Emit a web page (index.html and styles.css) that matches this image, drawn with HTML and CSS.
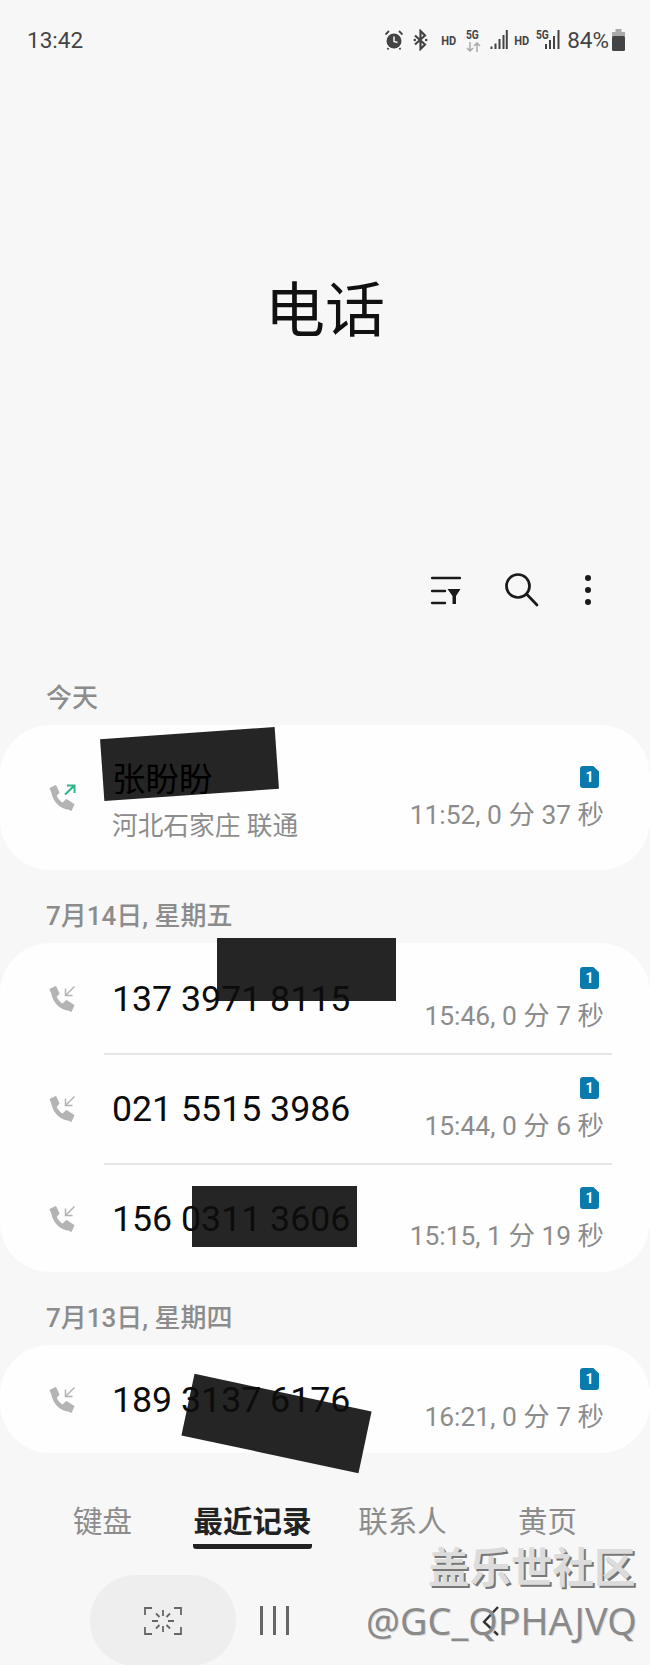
FILE: index.html
```html
<!DOCTYPE html>
<html lang="zh-CN">
<head>
    <meta charset="UTF-8">
    <meta name="viewport" content="width=device-width, initial-scale=1.0">
    <title>电话</title>
    <link rel="stylesheet" href="styles.css">
</head>
<body>
    <svg class="svg-defs" width="0" height="0">
        <defs>
            <g id="handset">
                <path d="M5.500 5.500C5 14 12 23 22 23.500" fill="none" stroke="#b4b4b4" stroke-width="4.400"/>
                <path d="M2.500 4.500L7.500 2L10.500 8.500L6.500 12.500Z" fill="#b4b4b4" stroke="#b4b4b4" stroke-width="1.800" stroke-linejoin="round"/>
                <path d="M14.500 20L18.500 16L25.500 20.500L23 26Z" fill="#b4b4b4" stroke="#b4b4b4" stroke-width="1.800" stroke-linejoin="round"/>
            </g>
        </defs>
    </svg>

    <!-- status bar -->
    <div class="status">
        <span class="clock">13:42</span>
        <div class="status-icons">
            <svg class="ic-alarm" width="18" height="20" viewBox="0 0 18 20">
                <circle cx="9" cy="11" r="7.500" fill="#444"/>
                <path d="M9 6.500V11.500L12.500 12.500" fill="none" stroke="#f7f7f7" stroke-width="1.500"/>
                <path d="M0.500 4.500L4 1M17.500 4.500L14 1M3.500 18L2.500 19.500M14.500 18L15.500 19.500" stroke="#444" stroke-width="1.800"/>
            </svg>
            <svg class="ic-bt" width="15" height="22" viewBox="0 0 15 22">
                <path d="M2 6.500L12 15.500L7.500 20V2L12 6.500L2 15.500" fill="none" stroke="#444" stroke-width="2.200"/>
                <circle cx="1.800" cy="11" r="1.300" fill="#444"/>
                <circle cx="13.200" cy="11" r="1.300" fill="#444"/>
            </svg>
            <span class="hd">HD</span>
            <div class="net">
                <span class="fiveg">5G</span>
                <svg width="15" height="10" viewBox="0 0 15 10">
                    <path d="M4 0V9M1 6L4 9L7 6" fill="none" stroke="#aaa" stroke-width="1.500"/>
                    <path d="M11 10V1M8 4L11 1L14 4" fill="none" stroke="#aaa" stroke-width="1.500"/>
                </svg>
            </div>
            <svg class="ic-signal" width="18" height="22" viewBox="0 0 18 22">
                <path d="M1.500 20V17.500M5.500 20V14.500M9.500 20V10M13.500 20V6M16.800 20V1" stroke="#444" stroke-width="2"/>
            </svg>
            <span class="hd hd2">HD</span>
            <div class="net2">
                <span class="fiveg">5G</span>
                <svg width="18" height="22" viewBox="0 0 18 22">
                    <path d="M3 20V15M7 20V11M11 20V7M15.500 20V1" stroke="#444" stroke-width="2"/>
                </svg>
            </div>
            <span class="percent">84%</span>
            <svg width="13" height="22" viewBox="0 0 13 22">
                <rect x="3.500" y="0" width="6" height="3" fill="#aaa"/>
                <rect x="0" y="3" width="13" height="5" fill="#aaa"/>
                <rect x="0" y="7" width="13" height="15" rx="1.500" fill="#444"/>
            </svg>
        </div>
    </div>

    <h1 class="title">电话</h1>

    <!-- toolbar -->
    <div class="toolbar">
        <svg width="30" height="30" viewBox="0 0 30 30">
            <path d="M1 3H29M1 16H14M1 28H14" stroke="#1a1a1a" stroke-width="2.400" stroke-linecap="round"/>
            <path d="M16.500 14H29.500L25 21V29H21.500V21Z" fill="#1a1a1a"/>
        </svg>
        <svg class="tool-search" width="36" height="34" viewBox="0 0 36 34">
            <circle cx="14" cy="13" r="11.500" fill="none" stroke="#1a1a1a" stroke-width="2.700"/>
            <path d="M22.500 21L33 32" stroke="#1a1a1a" stroke-width="2.700" stroke-linecap="round"/>
        </svg>
        <svg class="tool-more" width="8" height="32" viewBox="0 0 8 32">
            <circle cx="4" cy="4" r="3" fill="#1a1a1a"/>
            <circle cx="4" cy="16" r="3" fill="#1a1a1a"/>
            <circle cx="4" cy="28" r="3" fill="#1a1a1a"/>
        </svg>
    </div>

    <!-- redaction blocks lying over the list -->
    <div class="redact redact-name"></div>
    <div class="redact redact-a"></div>
    <div class="redact redact-b"></div>
    <div class="redact redact-c"></div>

    <div class="section-label first">今天</div>
    <div class="card">
        <div class="row row-tall">
            <svg class="call-icon" width="28" height="28" viewBox="0 0 28 28">
                <use href="#handset"/>
                <path d="M17 10.500L26.500 1.500M19 1.500H26.500V9" fill="none" stroke="#2fb58c" stroke-width="2"/>
            </svg>
            <div class="call-text">
                <div class="name">张盼盼</div>
                <div class="place">河北石家庄 联通</div>
            </div>
            <div class="call-meta">
                <div class="sim">1</div>
                <div class="time">11:52, 0 分 37 秒</div>
            </div>
        </div>
    </div>

    <div class="section-label">7月14日, 星期五</div>
    <div class="card">
        <div class="row">
            <svg class="call-icon" width="28" height="28" viewBox="0 0 28 28">
                <use href="#handset"/>
                <path d="M26.500 1.500L17.500 10.500M17.500 3.500V10.500H24.500" fill="none" stroke="#b4b4b4" stroke-width="1.500"/>
            </svg>
            <div class="call-text"><div class="number">137 3971 8115</div></div>
            <div class="call-meta">
                <div class="sim">1</div>
                <div class="time">15:46, 0 分 7 秒</div>
            </div>
        </div>
        <div class="row row-line">
            <svg class="call-icon" width="28" height="28" viewBox="0 0 28 28">
                <use href="#handset"/>
                <path d="M26.500 1.500L17.500 10.500M17.500 3.500V10.500H24.500" fill="none" stroke="#b4b4b4" stroke-width="1.500"/>
            </svg>
            <div class="call-text"><div class="number">021 5515 3986</div></div>
            <div class="call-meta">
                <div class="sim">1</div>
                <div class="time">15:44, 0 分 6 秒</div>
            </div>
        </div>
        <div class="row row-line">
            <svg class="call-icon" width="28" height="28" viewBox="0 0 28 28">
                <use href="#handset"/>
                <path d="M26.500 1.500L17.500 10.500M17.500 3.500V10.500H24.500" fill="none" stroke="#b4b4b4" stroke-width="1.500"/>
            </svg>
            <div class="call-text"><div class="number">156 0311 3606</div></div>
            <div class="call-meta">
                <div class="sim">1</div>
                <div class="time">15:15, 1 分 19 秒</div>
            </div>
        </div>
    </div>

    <div class="section-label">7月13日, 星期四</div>
    <div class="card">
        <div class="row row-single">
            <svg class="call-icon" width="28" height="28" viewBox="0 0 28 28">
                <use href="#handset"/>
                <path d="M26.500 1.500L17.500 10.500M17.500 3.500V10.500H24.500" fill="none" stroke="#b4b4b4" stroke-width="1.500"/>
            </svg>
            <div class="call-text"><div class="number">189 3137 6176</div></div>
            <div class="call-meta">
                <div class="sim">1</div>
                <div class="time">16:21, 0 分 7 秒</div>
            </div>
        </div>
    </div>

    <!-- bottom tabs -->
    <div class="tabs">
        <div class="tab">键盘</div>
        <div class="tab tab-active"><span>最近记录</span></div>
        <div class="tab">联系人</div>
        <div class="tab">黄页</div>
    </div>

    <!-- nav bar -->
    <div class="nav">
        <div class="nav-pill">
            <svg width="38" height="28" viewBox="0 0 38 28" fill="none" stroke="#666" stroke-width="1.800">
                <path d="M8 1H1V8M30 1H37V8M1 20V27H8M37 20V27H30"/>
                <path d="M19 3V9M19 19V25M8 14H14M24 14H30M12 6.500L15.500 10M26 6.500L22.500 10M12 21.500L15.500 18M26 21.500L22.500 18"/>
            </svg>
        </div>
        <div class="nav-recent"><i></i><i></i><i></i></div>
        <svg class="nav-back" width="18" height="30" viewBox="0 0 18 30">
            <path d="M16 1L2 16L16 29" fill="none" stroke="#333" stroke-width="2.400"/>
        </svg>
    </div>

    <!-- watermark over the nav bar -->
    <div class="mark-title">盖乐世社区</div>
    <div class="mark-user">@GC_QPHAJVQ</div>
</body>
</html>
```

FILE: styles.css
```css
* {
    margin: 0;
    padding: 0;
    box-sizing: border-box;
}

html, body {
    height: 1665px;
    overflow: hidden;
}

body {
    position: relative;
    background-color: #f7f7f7;
    font-family: Roboto, "Noto Sans CJK SC", sans-serif;
    color: #000;
}

.svg-defs {
    display: block;
    height: 0;
}

/* status bar */
.status {
    height: 80px;
    display: flex;
    align-items: center;
    justify-content: space-between;
    padding: 0 25px 0 27px;
    color: #444;
}

.clock {
    font-size: 22.500px;
}

.status-icons {
    display: flex;
    align-items: center;
}

.ic-bt {
    margin-left: 10px;
}

.hd {
    margin-left: 12px;
    font-size: 13px;
    font-weight: 700;
    transform: scaleX(0.85);
}

.hd2 {
    margin-left: 5px;
}

.net {
    margin-left: 8px;
    width: 16px;
    display: flex;
    flex-direction: column;
    align-items: center;
}

.net2 {
    margin-left: 6px;
    width: 25px;
    height: 22px;
    display: flex;
}

.net2 svg {
    flex-shrink: 0;
}

.net2 .fiveg {
    width: 7px;
    line-height: 12px;
}

.fiveg {
    font-size: 12px;
    font-weight: 700;
    line-height: 13px;
    transform: scaleX(0.85);
    transform-origin: left;
}

.ic-signal {
    margin-left: 8px;
}

.percent {
    margin-left: 6px;
    margin-right: 3px;
    font-size: 22.500px;
}

/* title and tools */
.title {
    margin-top: 192px;
    height: 80px;
    line-height: 80px;
    margin-bottom: 208px;
    text-align: center;
    font-size: 60px;
    font-weight: 400;
    color: #111;
}

.toolbar {
    height: 60px;
    display: flex;
    align-items: center;
    justify-content: flex-end;
    padding-right: 58px;
}

.tool-search {
    margin-left: 43px;
}

.tool-more {
    margin-left: 44px;
}

/* list */
.section-label {
    height: 46px;
    line-height: 46px;
    margin: 23px 0 4px;
    padding-left: 46px;
    font-size: 26px;
    font-weight: 500;
    color: #8c8c8c;
}

.section-label.first {
    margin-top: 55px;
}

.card {
    background-color: #fefefe;
    border-radius: 50px;
}

.row {
    height: 110px;
    display: flex;
    align-items: center;
    padding: 2px 46px 0 48px;
}

.row-tall {
    height: 145px;
    padding-top: 1px;
}

.row-single {
    height: 108px;
}

.row-line {
    position: relative;
}

.row-line:last-child {
    height: 109px;
    padding-top: 3px;
}

.row-line::before {
    content: "";
    position: absolute;
    left: 104px;
    right: 38px;
    top: 0;
    height: 2px;
    background-color: #e6e6e6;
}

.call-icon {
    flex-shrink: 0;
}

.call-text {
    flex: 1;
    margin-left: 36px;
    position: relative;
    z-index: 1;
}

.row-tall .call-text {
    padding-top: 6px;
}

.name {
    font-size: 33.500px;
    line-height: 44px;
    color: #000;
}

.place {
    font-size: 25.700px;
    line-height: 36px;
    margin-top: 6px;
    color: #8c8c8c;
}

.number {
    font-size: 35.700px;
    line-height: 44px;
    color: #0c0c0c;
}

.call-meta {
    display: flex;
    flex-direction: column;
    align-items: flex-end;
    gap: 12px;
}

.sim {
    width: 19px;
    height: 22px;
    margin-right: 5px;
    border-radius: 3px;
    background-color: #0a7aad;
    clip-path: polygon(0 0, 70% 0, 100% 25%, 100% 100%, 0 100%);
    color: #fff;
    font-size: 14px;
    font-weight: 700;
    line-height: 22px;
    text-align: center;
}

.time {
    font-size: 26.400px;
    line-height: 30px;
    color: #8c8c8c;
}

/* black marks someone drew over the shot */
.redact {
    position: absolute;
    background-color: #252525;
}

.redact-name {
    left: 102px;
    top: 733px;
    width: 175px;
    height: 62px;
    transform: rotate(-4deg);
}

.redact-a {
    left: 217px;
    top: 938px;
    width: 179px;
    height: 63px;
}

.redact-b {
    left: 192px;
    top: 1186px;
    width: 165px;
    height: 61px;
}

.redact-c {
    left: 186px;
    top: 1392px;
    width: 181px;
    height: 63px;
    transform: rotate(12deg);
}

/* tabs */
.tabs {
    margin-top: 48px;
    padding-left: 27.500px;
    display: grid;
    grid-template-columns: 150px 150px 150px 140px;
}

.tab {
    text-align: center;
    font-size: 29.500px;
    line-height: 42px;
    color: #8c8c8c;
}

.tab-active {
    color: #222;
    font-weight: 700;
}

.tab-active span {
    display: inline-block;
    height: 48px;
    border-bottom: 5px solid #222;
    border-radius: 3px;
}

/* nav bar */
.nav {
    margin-top: 26px;
    height: 91px;
    display: flex;
    align-items: center;
    padding-left: 90px;
}

.nav-pill {
    width: 146px;
    height: 91px;
    border-radius: 46px;
    background-color: #eeeeee;
    display: flex;
    align-items: center;
    justify-content: center;
}

.nav-recent {
    margin-left: 24px;
    display: flex;
    gap: 10px;
}

.nav-recent i {
    display: block;
    width: 3px;
    height: 29px;
    background-color: #666;
}

.nav-back {
    margin-left: 193px;
}

/* watermark */
.mark-title {
    position: absolute;
    left: 428px;
    top: 1542px;
    font-size: 41.500px;
    line-height: 54px;
    font-weight: 700;
    color: #dcdcdc;
    text-shadow: 2px 2px 0 #777;
    white-space: nowrap;
}

.mark-user {
    position: absolute;
    left: 366px;
    top: 1596px;
    font-family: "Noto Sans", sans-serif;
    font-size: 37.800px;
    line-height: 50px;
    color: #8a8a8a;
    text-shadow: 1px 1px 0 #d8d8d8;
    white-space: nowrap;
}
```
